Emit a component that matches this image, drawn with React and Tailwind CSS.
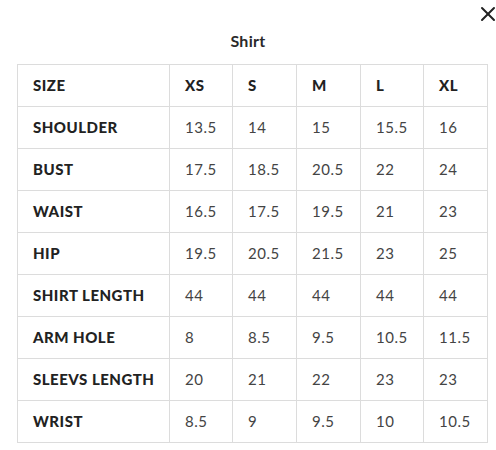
import { X } from 'lucide-react';

const sizes = ['XS', 'S', 'M', 'L', 'XL'];

const rows = [
  { label: 'SHOULDER', values: ['13.5', '14', '15', '15.5', '16'] },
  { label: 'BUST', values: ['17.5', '18.5', '20.5', '22', '24'] },
  { label: 'WAIST', values: ['16.5', '17.5', '19.5', '21', '23'] },
  { label: 'HIP', values: ['19.5', '20.5', '21.5', '23', '25'] },
  { label: 'SHIRT LENGTH', values: ['44', '44', '44', '44', '44'] },
  { label: 'ARM HOLE', values: ['8', '8.5', '9.5', '10.5', '11.5'] },
  { label: 'SLEEVS LENGTH', values: ['20', '21', '22', '23', '23'] },
  { label: 'WRIST', values: ['8.5', '9', '9.5', '10', '10.5'] },
];

const colWidths = ['w-[152px]', 'w-[63px]', 'w-[64px]', 'w-[64px]', 'w-[63px]', 'w-[64px]'];

const App = () => {
  return (
    <div className="relative w-[496px] h-[450px] overflow-hidden bg-white font-['Lato',sans-serif]">
      {/* Close */}
      <button className="absolute left-[476px] top-[2px] text-[#222]">
        <X size={24} strokeWidth={2} />
      </button>

      {/* Title */}
      <div className="pt-[30px] pb-[13px] text-center text-[16px] font-bold leading-[21px] text-[#2a2a2a] tracking-[0.3px]">
        Shirt
      </div>

      {/* Size table */}
      <table className="ml-[17px] w-[470px] table-fixed border-collapse text-[15px]">
        <colgroup>
          {colWidths.map((w, i) => (
            <col key={i} className={w} />
          ))}
        </colgroup>
        <thead>
          <tr className="h-[42px]">
            <th className="border border-[#dcdcdc] pl-[15px] text-left font-black text-[#222] tracking-[0.5px]">SIZE</th>
            {sizes.map((s) => (
              <th key={s} className="border border-[#dcdcdc] pl-[15px] text-left font-black text-[#222] tracking-[0.5px]">
                {s}
              </th>
            ))}
          </tr>
        </thead>
        <tbody>
          {rows.map((row) => (
            <tr key={row.label} className="h-[42px]">
              <td className="border border-[#dcdcdc] pl-[15px] font-black text-[#222] tracking-[0.5px] whitespace-nowrap">
                {row.label}
              </td>
              {row.values.map((v, i) => (
                <td key={i} className="border border-[#dcdcdc] pl-[15px] font-normal text-[#444] tracking-[0.5px]">
                  {v}
                </td>
              ))}
            </tr>
          ))}
        </tbody>
      </table>
    </div>
  );
};

export default App;
